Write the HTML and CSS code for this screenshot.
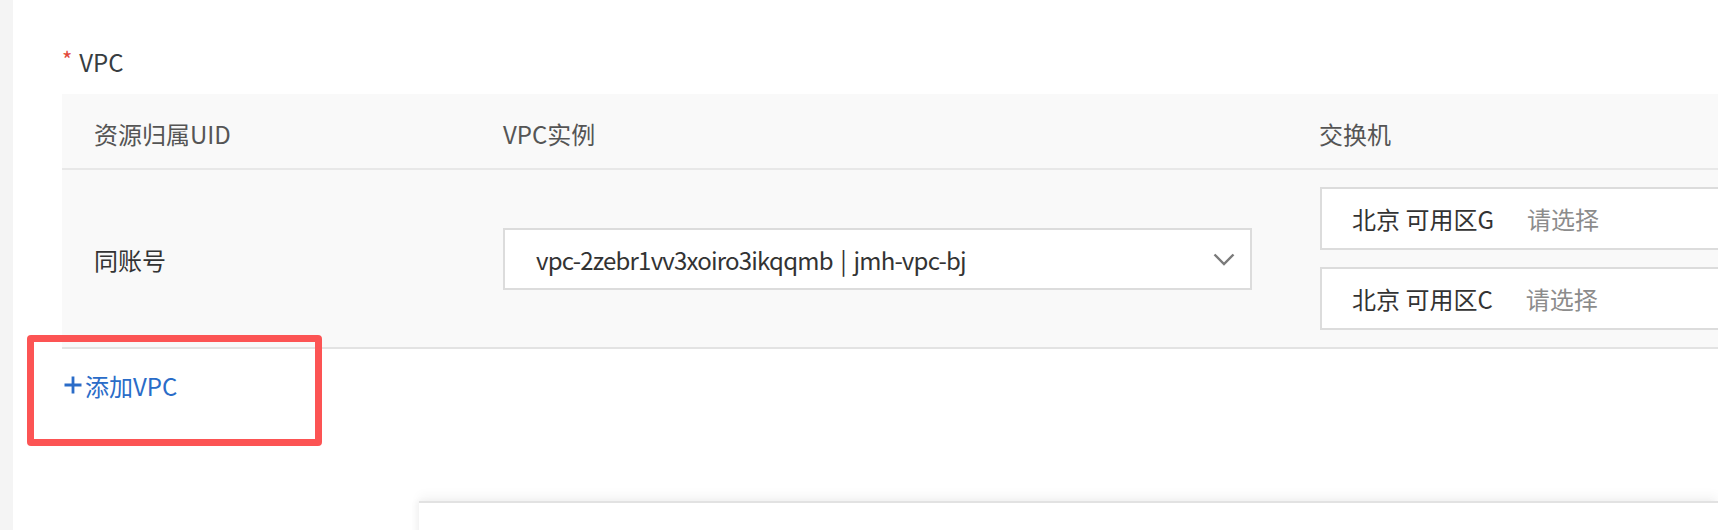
FILE: index.html
```html
<!DOCTYPE html>
<html lang="zh-CN">
<head>
<meta charset="utf-8">
<title>VPC</title>
<link rel="stylesheet" href="styles.css">
</head>
<body>
<div class="page">
  <div class="side-edge"></div>
  <div class="main">
    <div class="form-label"><span class="req">*</span><span>VPC</span></div>
    <div class="vpc-table">
      <div class="thead">
        <div class="cell c1">资源归属UID</div>
        <div class="cell c2">VPC实例</div>
        <div class="cell c3">交换机</div>
      </div>
      <div class="trow">
        <div class="cell c1">同账号</div>
        <div class="cell c2">
          <div class="select">
            <span class="select-value">vpc-2zebr1vv3xoiro3ikqqmb | jmh-vpc-bj</span>
            <svg class="chevron" width="22" height="14" viewBox="0 0 22 14"><polyline points="1.5,1.5 11,11 20.5,1.5" fill="none" stroke="#7a7a7a" stroke-width="2.4"/></svg>
          </div>
        </div>
        <div class="cell c3 switches">
          <div class="switch-box"><span class="zone">北京 可用区G</span><span class="placeholder">请选择</span></div>
          <div class="switch-box"><span class="zone">北京 可用区C</span><span class="placeholder">请选择</span></div>
        </div>
      </div>
    </div>
    <div class="add-vpc">
      <svg class="plus" width="20" height="20" viewBox="0 0 20 20"><path d="M10 1.5v17M1.5 10h17" stroke="#2a6cc8" stroke-width="2.8" fill="none"/></svg>
      <span>添加VPC</span>
    </div>
    <div class="footer-panel"></div>
  </div>
  <div class="annotation"></div>
</div>
</body>
</html>
```
FILE: styles.css
```css
* { box-sizing: border-box; }
html, body {
  margin: 0;
  padding: 0;
  background: #ffffff;
  overflow: hidden;
}
body {
  font-family: "Noto Sans CJK SC", "Noto Sans", sans-serif;
  font-size: 24px;
  color: #333333;
  width: 1718px;
  height: 530px;
}
.page {
  position: relative;
  display: flex;
  width: 1718px;
  height: 530px;
  overflow: hidden;
}
.side-edge {
  flex: 0 0 13px;
  background: #f4f4f4;
}
.main {
  flex: 1 1 auto;
  padding: 45px 0 0 49px;
  min-width: 0;
}
.form-label {
  display: flex;
  align-items: baseline;
  height: 34px;
  line-height: 34px;
  margin-bottom: 15px;
  color: #373d41;
}
.req {
  color: #e2483a;
  font-size: 22px;
  margin-right: 7px;
  position: relative;
  top: -4px;
}
.vpc-table {
  width: 1800px;
}
.thead, .trow {
  display: grid;
  grid-template-columns: 409px 815px 1fr;
  background: #f9f9f9;
}
.thead {
  height: 76px;
  border-bottom: 2px solid #e8e8e8;
  align-items: center;
  color: #555555;
}
.thead .cell {
  padding-top: 4px;
}
.trow {
  padding: 17px 0;
  border-bottom: 2px solid #e3e3e3;
  align-items: center;
}
.cell {
  padding-left: 32px;
}
.c3 { padding-left: 33px; }
.trow .c1 { padding-top: 2px; }
.select {
  width: 749px;
  height: 62px;
  background: #ffffff;
  border: 2px solid #dcdcdc;
  display: flex;
  align-items: center;
  justify-content: space-between;
  padding: 0 15px 0 31px;
}
.select-value {
  color: #333333;
  padding-top: 2px;
  letter-spacing: -0.8px;
  word-spacing: 3px;
}
.chevron { display: block; margin-top: 2px; }
.switches {
  display: flex;
  flex-direction: column;
  gap: 17px;
  padding-left: 34px;
}
.switch-box {
  height: 63px;
  background: #ffffff;
  border: 2px solid #dcdcdc;
  display: flex;
  align-items: center;
  padding-left: 30px;
}
.zone { color: #333333; }
.placeholder {
  color: #8c8c8c;
  margin-left: 33px;
}
.add-vpc {
  display: flex;
  align-items: center;
  gap: 2px;
  margin-top: 19px;
  height: 34px;
  color: #2a6cc8;
  padding-left: 1px;
}
.plus { display: block; }
.footer-panel {
  margin-top: 99px;
  margin-left: 357px;
  height: 60px;
  background: #ffffff;
  border-top: 2px solid #e2e2e2;
  box-shadow: 0 -6px 10px rgba(0, 0, 0, 0.04), -3px 0 6px rgba(0, 0, 0, 0.04);
}
.annotation {
  position: absolute;
  left: 27px;
  top: 335px;
  width: 295px;
  height: 111px;
  border: 7px solid #fc5454;
  border-radius: 4px;
}
```
